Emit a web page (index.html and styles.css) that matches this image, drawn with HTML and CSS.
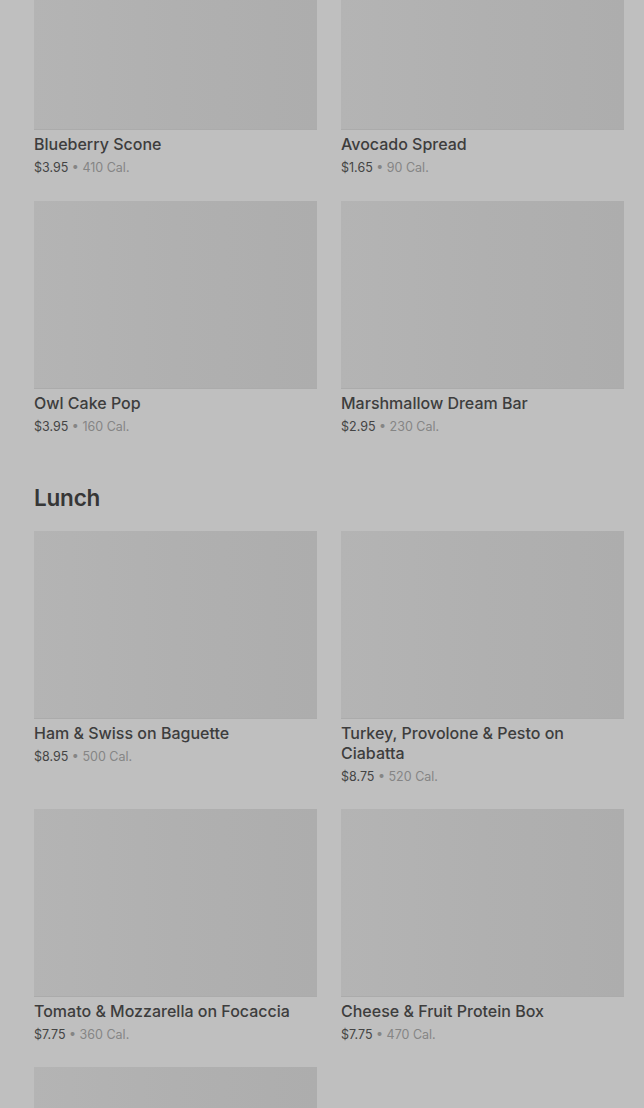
FILE: index.html
```html
<!doctype html>
<html lang="en">
  <head>
    <meta charset="UTF-8" />
    <meta name="viewport" content="width=device-width, initial-scale=1.0" />
    <title>Menu</title>
    <link rel="stylesheet" href="styles.css">
  </head>
  <body>
    <main class="menu">
      <section class="category">
        <div class="grid">
          <a class="item" href="#">
            <div class="thumb"></div>
            <h3>Blueberry Scone</h3>
            <p class="meta">$3.95 <span class="cal">• 410 Cal.</span></p>
          </a>
          <a class="item" href="#">
            <div class="thumb"></div>
            <h3>Avocado Spread</h3>
            <p class="meta">$1.65 <span class="cal">• 90 Cal.</span></p>
          </a>
          <a class="item" href="#">
            <div class="thumb"></div>
            <h3>Owl Cake Pop</h3>
            <p class="meta">$3.95 <span class="cal">• 160 Cal.</span></p>
          </a>
          <a class="item" href="#">
            <div class="thumb"></div>
            <h3>Marshmallow Dream Bar</h3>
            <p class="meta">$2.95 <span class="cal">• 230 Cal.</span></p>
          </a>
        </div>
      </section>

      <section class="category">
        <h2>Lunch</h2>
        <div class="grid">
          <a class="item" href="#">
            <div class="thumb"></div>
            <h3>Ham &amp; Swiss on Baguette</h3>
            <p class="meta">$8.95 <span class="cal">• 500 Cal.</span></p>
          </a>
          <a class="item" href="#">
            <div class="thumb"></div>
            <h3>Turkey, Provolone &amp; Pesto on Ciabatta</h3>
            <p class="meta">$8.75 <span class="cal">• 520 Cal.</span></p>
          </a>
          <a class="item" href="#">
            <div class="thumb"></div>
            <h3>Tomato &amp; Mozzarella on Focaccia</h3>
            <p class="meta">$7.75 <span class="cal">• 360 Cal.</span></p>
          </a>
          <a class="item" href="#">
            <div class="thumb"></div>
            <h3>Cheese &amp; Fruit Protein Box</h3>
            <p class="meta">$7.75 <span class="cal">• 470 Cal.</span></p>
          </a>
          <a class="item" href="#">
            <div class="thumb"></div>
          </a>
        </div>
      </section>
    </main>
  </body>
</html>
```

FILE: styles.css
```css
* {
  box-sizing: border-box;
  margin: 0;
  padding: 0;
}
body {
  font-family: Inter, "Liberation Sans", sans-serif;
  background-color: #bfbfbf;
  color: #3b3b3b;
  overflow: hidden;
  height: 1108px;
}
/* page is shown scrolled down a little, under a dimmed backdrop */
.menu {
  padding: 0 20px 0 34px;
  margin-top: -58px;
}
.category + .category {
  margin-top: 48px;
}
h2 {
  font-size: 22.5px;
  line-height: 28px;
  font-weight: 600;
  color: #363636;
  margin-bottom: 19px;
  letter-spacing: -0.2px;
}
.grid {
  display: grid;
  grid-template-columns: 1fr 1fr;
  column-gap: 24px;
  row-gap: 23px;
  align-items: start;
}
.category:first-child .grid {
  row-gap: 24px;
}
.item {
  display: block;
  text-decoration: none;
  color: inherit;
}
.thumb {
  height: 188px;
  background: linear-gradient(90deg, #b4b4b4 0%, #b0b0b0 50%, #adadad 100%);
  border-bottom: 1px solid #ababab;
}
.item h3 {
  font-size: 16px;
  line-height: 20px;
  font-weight: 500;
  margin-top: 4px;
  color: #3d3d3d;
}
.meta {
  font-size: 12.5px;
  line-height: 18px;
  margin-top: 5px;
  color: #444;
}
.cal {
  color: #858585;
}
```
